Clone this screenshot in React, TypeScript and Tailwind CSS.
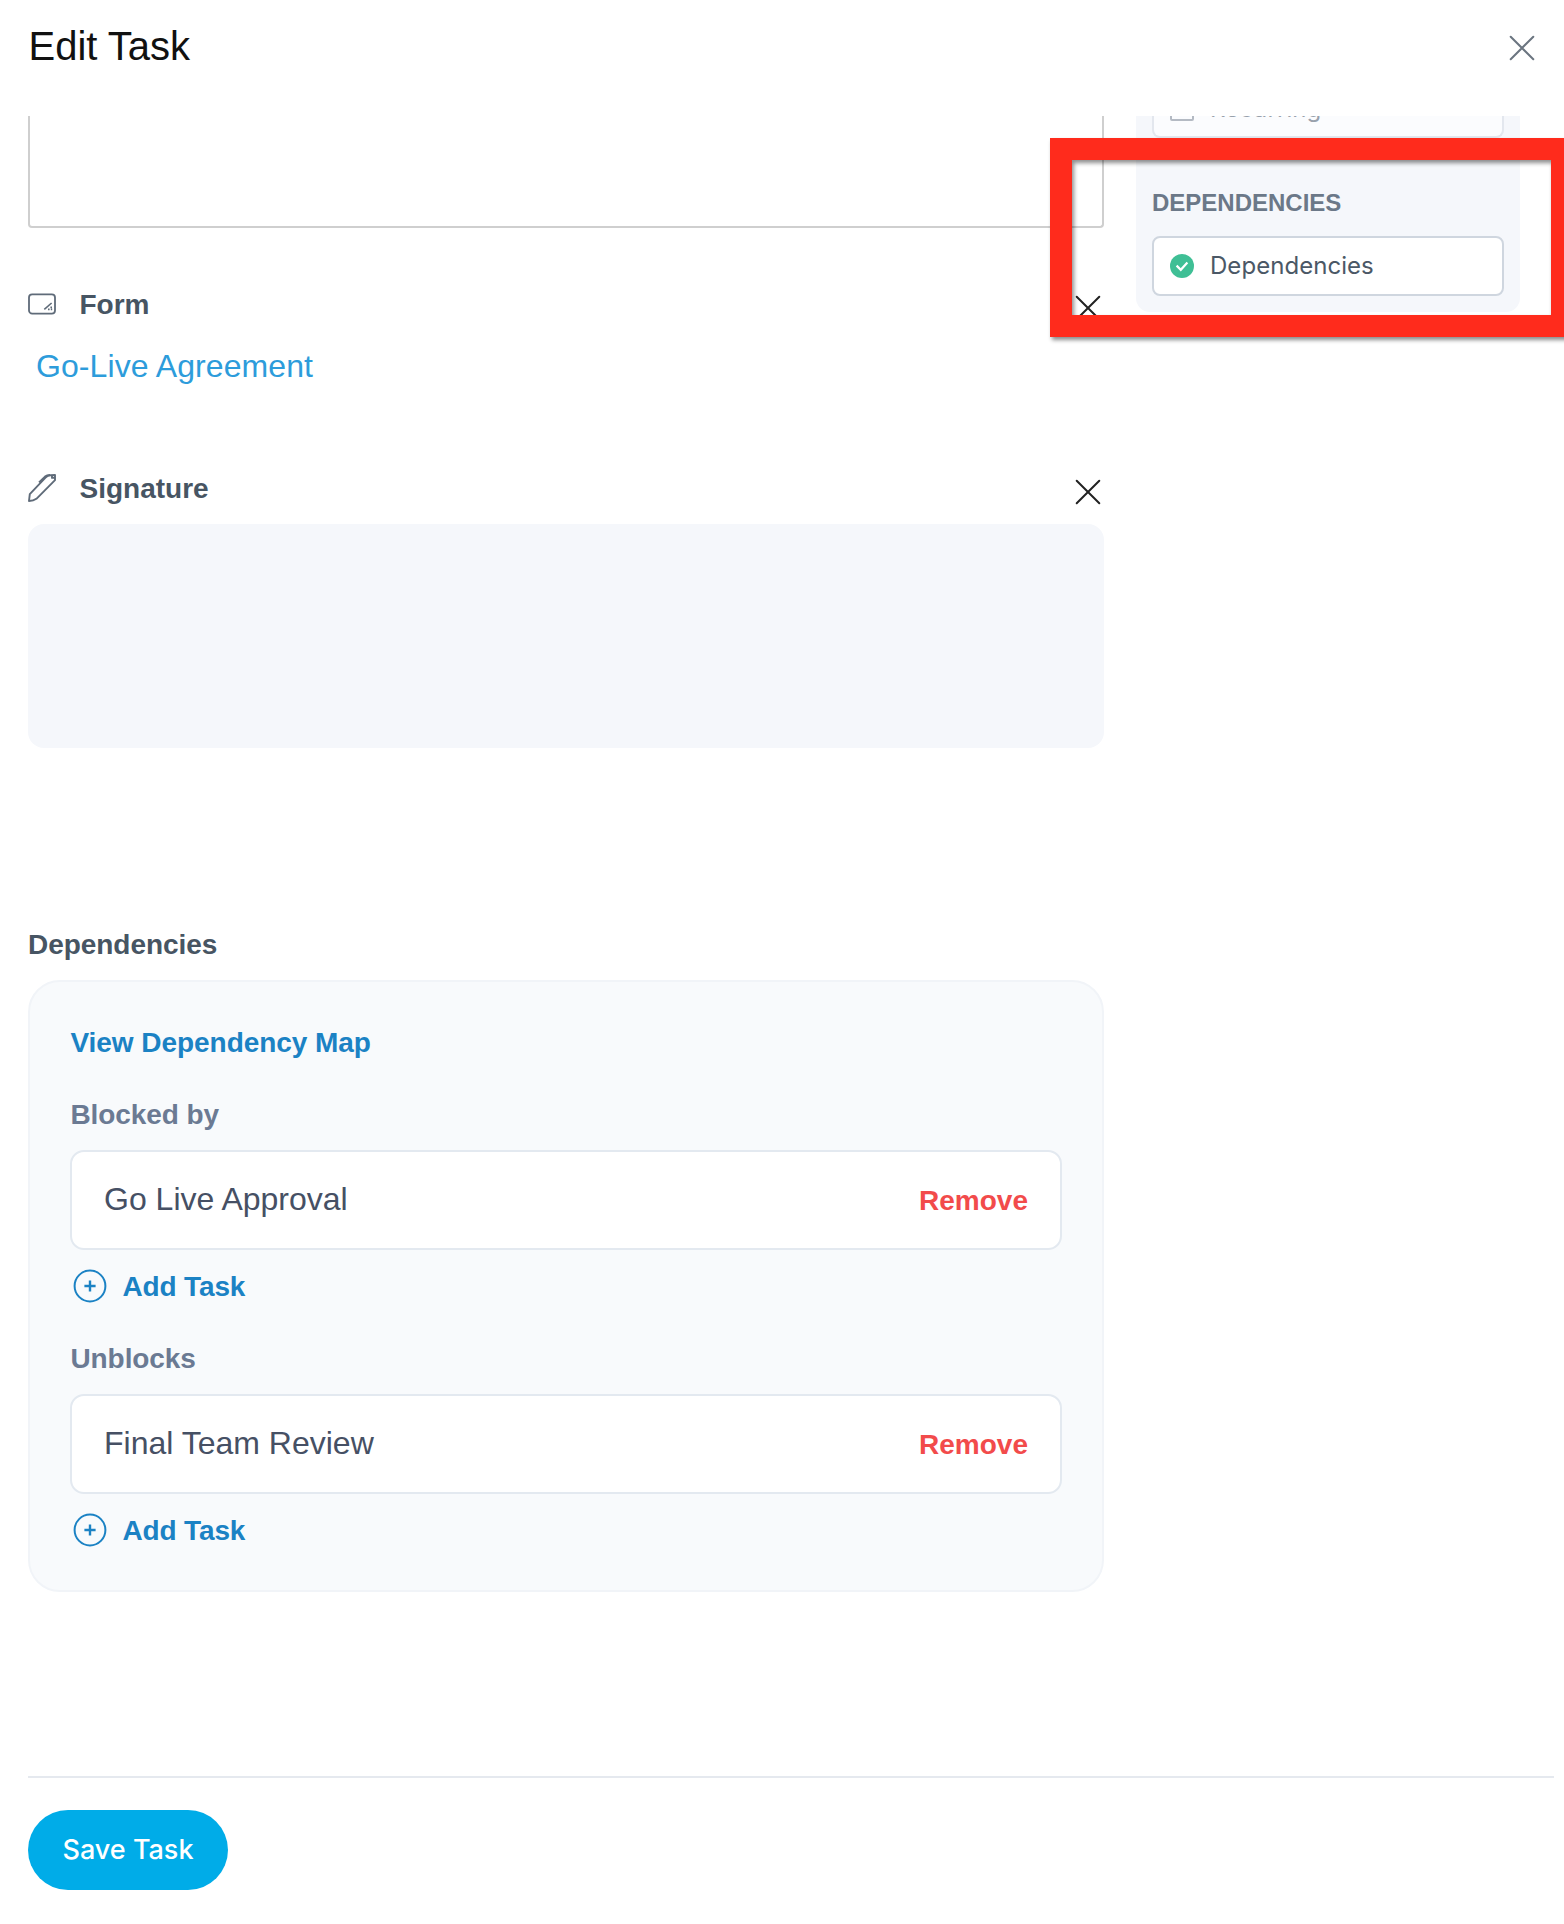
import React from "react";

function Cross({ className }: { className: string }) {
  return (
    <svg className={className} viewBox="0 0 26 26" fill="none" stroke="currentColor" strokeWidth="2" strokeLinecap="round">
      <path d="M1.7 1.7 24.3 24.3M24.3 1.7 1.7 24.3" />
    </svg>
  );
}

function AddTask() {
  return (
    <button className="mt-[18px] ml-[3px] flex h-[36px] items-center text-[28px] font-bold text-[#1b82c4]">
      <svg className="mr-[15.5px] size-[34px]" viewBox="0 0 34 34" fill="none" stroke="currentColor" strokeWidth="2">
        <circle cx="17" cy="17" r="15.4" />
        <path d="M17 11.4v11.2M11.4 17h11.2" strokeWidth="2.4" />
      </svg>
      <span className="pt-[2px] leading-[36px] tracking-[-0.15px]">Add Task</span>
    </button>
  );
}

function TaskGroup({ label, task }: { label: string; task: string }) {
  return (
    <div>
      <h3 className="pt-px pl-[0.5px] text-[28px] leading-[40px] font-bold tracking-[-0.1px] text-[#6b7a93]">{label}</h3>
      <div className="mt-[15px] flex h-[100px] items-center justify-between rounded-[14px] border-2 border-[#e3e9f0] bg-white px-[32px]">
        <span className="pb-[2px] text-[32px] leading-[40px] text-[#465064]">{task}</span>
        <button className="pt-[2px] text-[28px] leading-[40px] font-bold text-[#f24b4b]">Remove</button>
      </div>
      <AddTask />
    </div>
  );
}

export default function App() {
  return (
    <div className="relative flex h-[1924px] w-[1564px] flex-col overflow-hidden bg-white font-['Liberation_Sans',Arial,sans-serif]">
      <header className="flex h-[116px] shrink-0 items-start justify-between pt-[22px] pr-[29px] pl-[28.5px]">
        <h1 className="text-[40px] leading-[48px] text-[#111]">Edit Task</h1>
        <Cross className="mt-[13px] size-[26px] text-[#6b7580]" />
      </header>

      <div className="flex h-[1660px] shrink-0 items-start overflow-hidden pl-[28px]">
        <main className="w-[1076px]">
          <div className="h-[112px] rounded-b-[4px] border-2 border-t-0 border-[#cfcfcf]" />

          <div className="mt-[56px] flex h-[40px] items-center">
            <svg className="size-[28px] text-[#5f6b79]" viewBox="0 0 28 28" fill="none" stroke="currentColor" strokeWidth="1.8">
              <rect x="1" y="4.4" width="26" height="19.2" rx="3.2" />
              <path d="M16.3 19.4 23.6 13" strokeWidth="1.6" />
              <path d="M20 19.4h1.6M22.4 17.4h1.6M22.8 19.4h1.4" strokeWidth="1.6" />
            </svg>
            <h2 className="ml-[23.5px] pt-[2px] text-[28px] leading-[40px] font-bold text-[#475563]">Form</h2>
            <Cross className="mt-[8px] mr-[3px] ml-auto size-[26px] text-[#222]" />
          </div>
          <a className="mt-[22px] ml-[8px] block text-[32px] leading-[40px] tracking-[0.08px] text-[#2d9cdb]">Go-Live Agreement</a>

          <div className="mt-[82px] flex h-[40px] items-center">
            <svg className="size-[28px] text-[#5f6b79]" viewBox="0 0 28 28" fill="none" stroke="currentColor" strokeWidth="1.9" strokeLinejoin="round">
              <path d="M1 27 1.8 20.2 17.5 3.6Q19.5 1.4 22.5 1.2L27 1v5.2L8.4 24.8Q5.5 27 1 27Z" />
              <path d="M11 8.4 17 2.6Q19 1 22 1M24 1.5v2.4h3" />
            </svg>
            <h2 className="ml-[23.5px] pt-[2px] text-[28px] leading-[40px] font-bold text-[#475563]">Signature</h2>
            <Cross className="mt-[8px] mr-[3px] ml-auto size-[26px] text-[#222]" />
          </div>
          <div className="mt-[16px] h-[224px] rounded-[16px] bg-[#f5f7fb]" />

          <h2 className="mt-[177px] text-[28px] leading-[40px] font-bold tracking-[-0.05px] text-[#475563]">Dependencies</h2>
          <section className="mt-[15px] h-[612px] rounded-[32px] border-2 border-[#f1f4f8] bg-[#f8fafc] px-[40px] pt-[41px]">
            <a className="block pl-[0.5px] text-[28px] leading-[40px] font-bold tracking-[-0.05px] text-[#1b82c4]">View Dependency Map</a>
            <div className="mt-[31px] flex flex-col gap-[34px]">
              <TaskGroup label="Blocked by" task="Go Live Approval" />
              <TaskGroup label="Unblocks" task="Final Team Review" />
            </div>
          </section>
        </main>

        <aside className="ml-[32px] h-[196px] w-[384px] rounded-b-[14px] bg-[#f5f7fb] px-[16px]">
          <div className="h-[22px] overflow-hidden rounded-b-[8px] border-2 border-t-0 border-[#e3e7ee] bg-[#fbfcfe] px-[16px]">
            <div className="-mt-[22px] flex h-[30px] items-center">
              <span className="size-[24px] rounded-[2px] border-2 border-[#b4bac3]" />
              <span className="ml-[16px] font-[Inter] text-[24px] leading-[30px] tracking-[0.1px] text-[#98a1ac]">Recurring</span>
            </div>
          </div>
          <h3 className="mt-[49px] text-[24px] leading-[32px] font-bold text-[#6b7888]">DEPENDENCIES</h3>
          <div className="mt-[17px] flex h-[60px] items-center rounded-[8px] border-2 border-[#cfd6df] bg-white px-[16px]">
            <svg className="size-[24px]" viewBox="0 0 24 24" fill="none">
              <circle cx="12" cy="12" r="12" fill="#3fbf95" />
              <path d="m6.6 11.6 4.2 4.2 6.6-7.2" stroke="white" strokeWidth="2.2" />
            </svg>
            <span className="ml-[16px] font-[Inter] text-[24px] leading-[32px] tracking-[0.05px] text-[#4b5866]">Dependencies</span>
          </div>
        </aside>
      </div>

      <footer className="mr-[10px] ml-[28px] border-t-2 border-[#e5e9ef] pt-[32px]">
        <button className="h-[80px] w-[200px] rounded-full bg-[#00ace8] pt-px font-[Inter] text-[27px] font-medium text-white">Save Task</button>
      </footer>

      <div className="absolute top-[138px] left-[1050px] h-[199px] w-[523px] border-[22px] border-[#ff2b1c] shadow-[2px_3px_4px_rgba(0,0,0,0.45),inset_2px_3px_4px_rgba(0,0,0,0.45)]" />
    </div>
  );
}
